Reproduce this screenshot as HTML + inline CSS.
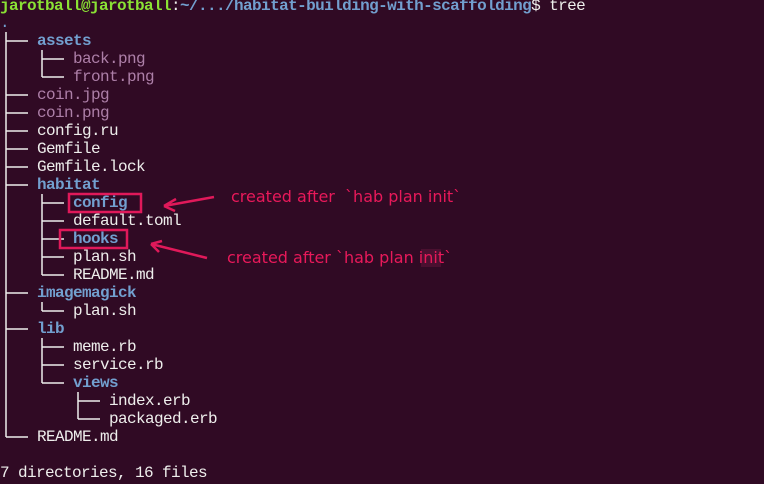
<!DOCTYPE html><html><head><style>
body{margin:0;width:764px;height:484px;background:#300a24;overflow:hidden;position:relative;font-family:"Liberation Mono","DejaVu Sans Mono",monospace;font-size:16px;letter-spacing:-0.6px;}
.t{position:absolute;white-space:pre;line-height:18px;height:18px;color:#eeeeec;}
.d{color:#729fcf;font-weight:bold}
.i{color:#ad7fa8}
.a{position:absolute;font-family:"DejaVu Sans","Liberation Sans",sans-serif;font-size:16px;letter-spacing:0;color:#e8195a;white-space:pre}
</style></head><body>
<div class="t" style="left:0;top:-3px"><span style="color:#8ae234;font-weight:bold">jarotball@jarotball</span>:<span style="color:#729fcf;font-weight:bold">~/.../habitat-building-with-scaffolding</span>$ tree</div>
<div class="t" style="left:0;top:14px;color:#729fcf">.</div>
<svg width="764" height="484" style="position:absolute;left:0;top:0" stroke="#eeeeec" stroke-width="1.5" fill="none">
<path d="M6 32V437M6 41H28M6 95H28M6 113H28M6 131H28M6 149H28M6 167H28M6 185H28M6 293H28M6 329H28M6 437H28"/>
<path d="M42 50V77M42 59H64M42 77H64"/>
<path d="M42 194V275M42 203H64M42 221H64M42 239H64M42 257H64M42 275H64"/>
<path d="M42 302V311M42 311H64"/>
<path d="M42 338V383M42 347H64M42 365H64M42 383H64"/>
<path d="M78 392V419M78 401H100M78 419H100"/>
</svg>
<div class="t d" style="left:37px;top:32px">assets</div>
<div class="t i" style="left:73px;top:50px">back.png</div>
<div class="t i" style="left:73px;top:68px">front.png</div>
<div class="t i" style="left:37px;top:86px">coin.jpg</div>
<div class="t i" style="left:37px;top:104px">coin.png</div>
<div class="t" style="left:37px;top:122px">config.ru</div>
<div class="t" style="left:37px;top:140px">Gemfile</div>
<div class="t" style="left:37px;top:158px">Gemfile.lock</div>
<div class="t d" style="left:37px;top:176px">habitat</div>
<div class="t d" style="left:73px;top:194px">config</div>
<div class="t" style="left:73px;top:212px">default.toml</div>
<div class="t d" style="left:73px;top:230px">hooks</div>
<div class="t" style="left:73px;top:248px">plan.sh</div>
<div class="t" style="left:73px;top:266px">README.md</div>
<div class="t d" style="left:37px;top:284px">imagemagick</div>
<div class="t" style="left:73px;top:302px">plan.sh</div>
<div class="t d" style="left:37px;top:320px">lib</div>
<div class="t" style="left:73px;top:338px">meme.rb</div>
<div class="t" style="left:73px;top:356px">service.rb</div>
<div class="t d" style="left:73px;top:374px">views</div>
<div class="t" style="left:109px;top:392px">index.erb</div>
<div class="t" style="left:109px;top:410px">packaged.erb</div>
<div class="t" style="left:37px;top:428px">README.md</div>
<div class="t" style="left:0;top:464px">7 directories, 16 files</div>
<div style="position:absolute;left:421px;top:249px;width:20px;height:18px;background:#4a1030"></div>
<svg width="764" height="484" style="position:absolute;left:0;top:0" fill="none" stroke="#e0195a" stroke-width="2.5">
<rect x="69" y="194" width="72" height="18"/>
<rect x="60" y="230" width="67" height="18"/>
<path d="M214 197L164 206M164 206L176 199M164 206L175 211"/>
<path d="M207 258L151 244M151 244L162 241M151 244L159 252"/>
</svg>
<div class="a" style="left:231px;top:187px">created after  `hab plan init`</div>
<div class="a" style="left:227px;top:248px">created after `hab plan init`</div>
</body></html>
